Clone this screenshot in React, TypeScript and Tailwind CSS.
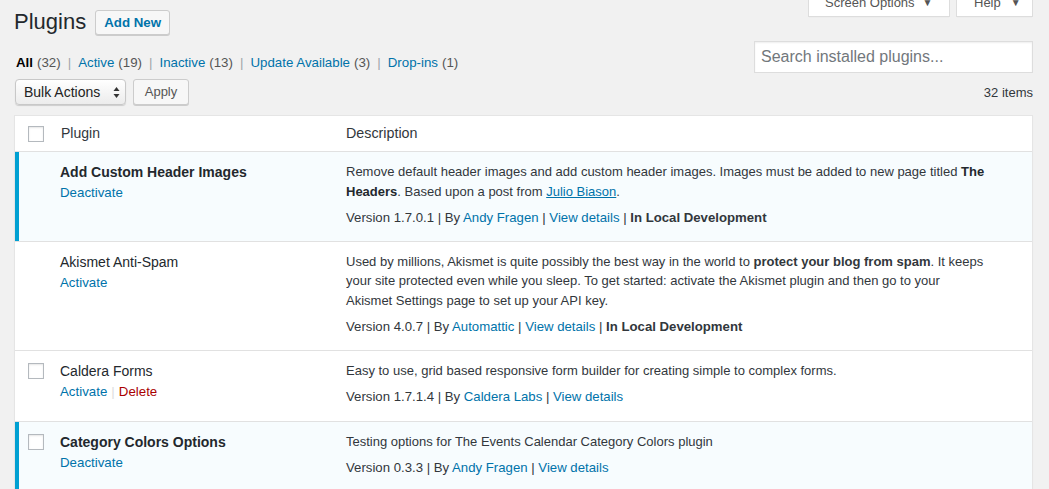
import React from "react";

const Sep = () => <span className="text-[#a0a5aa] px-[7px]">|</span>;

function CheckBox() {
  return <span className="block w-[16px] h-[16px] border border-[#b4b9be] bg-white shadow-[inset_0_1px_2px_rgba(0,0,0,0.1)]" />;
}

type Row = {
  name: string;
  active: boolean;
  checkbox: boolean;
  actions: React.ReactNode;
  desc: React.ReactNode;
  meta: React.ReactNode;
  extra?: string;
};

const link = "text-[#0073aa]";

const rows: Row[] = [
  {
    name: "Add Custom Header Images",
    active: true,
    checkbox: false,
    actions: <span className={link}>Deactivate</span>,
    desc: (
      <>
        Remove default header images and add custom header images. Images must be added to new page titled <b className="font-bold text-[#23282d]">The<br />Headers</b>. Based upon a post from <span className="text-[#0073aa] underline">Julio Biason</span>.
      </>
    ),
    meta: (
      <>
        Version 1.7.0.1 | By <span className={link}>Andy Fragen</span> | <span className={link}>View details</span> | <b className="font-bold">In Local Development</b>
      </>
    ),
  },
  {
    name: "Akismet Anti-Spam",
    active: false,
    checkbox: false,
    actions: <span className={link}>Activate</span>,
    desc: (
      <>
        Used by millions, Akismet is quite possibly the best way in the world to <b className="font-bold">protect your blog from spam</b>. It keeps
        <br />
        your site protected even while you sleep. To get started: activate the Akismet plugin and then go to your
        <br />
        Akismet Settings page to set up your API key.
      </>
    ),
    meta: (
      <>
        Version 4.0.7 | By <span className={link}>Automattic</span> | <span className={link}>View details</span> | <b className="font-bold">In Local Development</b>
      </>
    ),
  },
  {
    name: "Caldera Forms",
    active: false,
    checkbox: true,
    extra: "pb-[14px]",
    actions: (
      <>
        <span className={link}>Activate</span>
        <span className="text-[#ddd] px-[4px]">|</span>
        <span className="text-[#a00]">Delete</span>
      </>
    ),
    desc: <>Easy to use, grid based responsive form builder for creating simple to complex forms.</>,
    meta: (
      <>
        Version 1.7.1.4 | By <span className={link}>Caldera Labs</span> | <span className={link}>View details</span>
      </>
    ),
  },
  {
    name: "Category Colors Options",
    active: true,
    checkbox: true,
    actions: <span className={link}>Deactivate</span>,
    desc: <>Testing options for The Events Calendar Category Colors plugin</>,
    meta: (
      <>
        Version 0.3.3 | By <span className={link}>Andy Fragen</span> | <span className={link}>View details</span>
      </>
    ),
  },
];

export default function App() {
  return (
    <div className="min-h-screen bg-[#f1f1f1] text-[13px] text-[#444] font-['Liberation_Sans',Arial,sans-serif] pl-[14px] pr-[16px] overflow-hidden">
      {/* Top row */}
      <div className="flex justify-between items-start">
        <div className="flex items-center pt-[11px]">
          <h1 className="text-[22px] leading-[24px] text-[#23282d] font-normal -mt-[2px]">Plugins</h1>
          <span className="ml-[9px] h-[25px] px-[8px] flex items-center border border-[#ccc] bg-[#f7f7f7] rounded-[3px] text-[#0073aa] font-bold text-[13.3px] shadow-[0_1px_0_#ccc] -mt-[1px]">
            Add New
          </span>
        </div>
        <div className="flex gap-[6px] -mt-[11px]">
          <div className="h-[28px] w-[142px] bg-white border border-[#ddd] border-t-0 shadow-[0_1px_1px_-1px_rgba(0,0,0,0.1)] flex items-center pl-[16px] text-[#555]">
            Screen Options <span className="ml-[8px] text-[10px]">▼</span>
          </div>
          <div className="h-[28px] w-[77px] bg-white border border-[#ddd] border-t-0 shadow-[0_1px_1px_-1px_rgba(0,0,0,0.1)] flex items-center pl-[17px] text-[#555]">
            Help <span className="ml-[10px] text-[10px]">▼</span>
          </div>
        </div>
      </div>

      {/* Filters + search */}
      <div className="flex justify-between items-start mt-[6px]">
        <div className="pt-[12px]">
          <div className="flex items-center leading-[19px] pl-[2px] text-[13.3px]">
            <b className="font-bold text-black">All</b>
            <span className="text-[#555] ml-[4px]">(32)</span>
            <Sep />
            <span className={link}>Active</span>
            <span className="text-[#555] ml-[4px]">(19)</span>
            <Sep />
            <span className={link}>Inactive</span>
            <span className="text-[#555] ml-[4px]">(13)</span>
            <Sep />
            <span className={link}>Update Available</span>
            <span className="text-[#555] ml-[4px]">(3)</span>
            <Sep />
            <span className={link}>Drop-ins</span>
            <span className="text-[#555] ml-[4px]">(1)</span>
          </div>
          <div className="flex items-center mt-[7px] pl-[1px]">
            <div className="h-[26px] w-[111px] rounded-[4px] border border-[#c8c8c8] bg-gradient-to-b from-white to-[#ececec] shadow-[0_1px_1px_rgba(0,0,0,0.15)] flex items-center justify-between pl-[8px] pr-[5px] text-[14px] text-[#222]">
              <span>Bulk Actions</span>
              <svg width="7" height="13" viewBox="0 0 7 13">
                <path d="M3.5 1 L6.5 5 H0.5 Z" fill="#333" />
                <path d="M3.5 12 L6.5 8 H0.5 Z" fill="#333" />
              </svg>
            </div>
            <span className="ml-[7px] h-[26px] w-[56px] flex items-center justify-center border border-[#ccc] bg-[#f7f7f7] rounded-[3px] text-[#555] shadow-[0_1px_0_#ccc]">
              Apply
            </span>
          </div>
        </div>
        <div className="flex flex-col items-end">
          <div className="w-[279px] h-[32px] bg-white border border-[#ddd] shadow-[inset_0_1px_2px_rgba(0,0,0,0.07)] flex items-center pl-[6px] text-[16px] text-[#72777c]">
            Search installed plugins...
          </div>
          <div className="mt-[11px] text-[#32373c] leading-[18px]">32 items</div>
        </div>
      </div>

      {/* Table */}
      <div className="mt-[10px] bg-white border border-[#e5e5e5] shadow-[0_1px_1px_rgba(0,0,0,0.04)]">
        <div className="flex h-[36px] items-center border-b border-[#e1e1e1] text-[14px] text-[#32373c]">
          <div className="w-[46px] pl-[13px] shrink-0"><CheckBox /></div>
          <div className="w-[285px] shrink-0">Plugin</div>
          <div className="text-[14.3px]">Description</div>
        </div>
        {rows.map((r, i) => (
          <div
            key={i}
            className={`flex ${i > 0 ? "border-t border-[#e1e1e1]" : ""} ${r.active ? "bg-[#f7fcfe] shadow-[inset_4px_0_0_#00a0d2]" : "bg-white"}`}
          >
            <div className="w-[45px] pl-[13px] shrink-0 pt-[12px]">{r.checkbox ? <CheckBox /> : null}</div>
            <div className="w-[286px] shrink-0 pt-[10px]">
              <div className={`text-[14px] leading-[20px] text-[#23282d] ${r.active ? "font-bold" : ""}`}>{r.name}</div>
              <div className="mt-[1px] leading-[20px] text-[13.3px]">{r.actions}</div>
            </div>
            <div className={`flex-1 pt-[10px] pr-[6px] text-[#32373c] ${r.extra ?? "pb-[13px]"}`}>
              <p className="leading-[19.5px] whitespace-nowrap">{r.desc}</p>
              <div className="mt-[7px] leading-[19.5px] text-[13.2px]">{r.meta}</div>
            </div>
          </div>
        ))}
      </div>
    </div>
  );
}
